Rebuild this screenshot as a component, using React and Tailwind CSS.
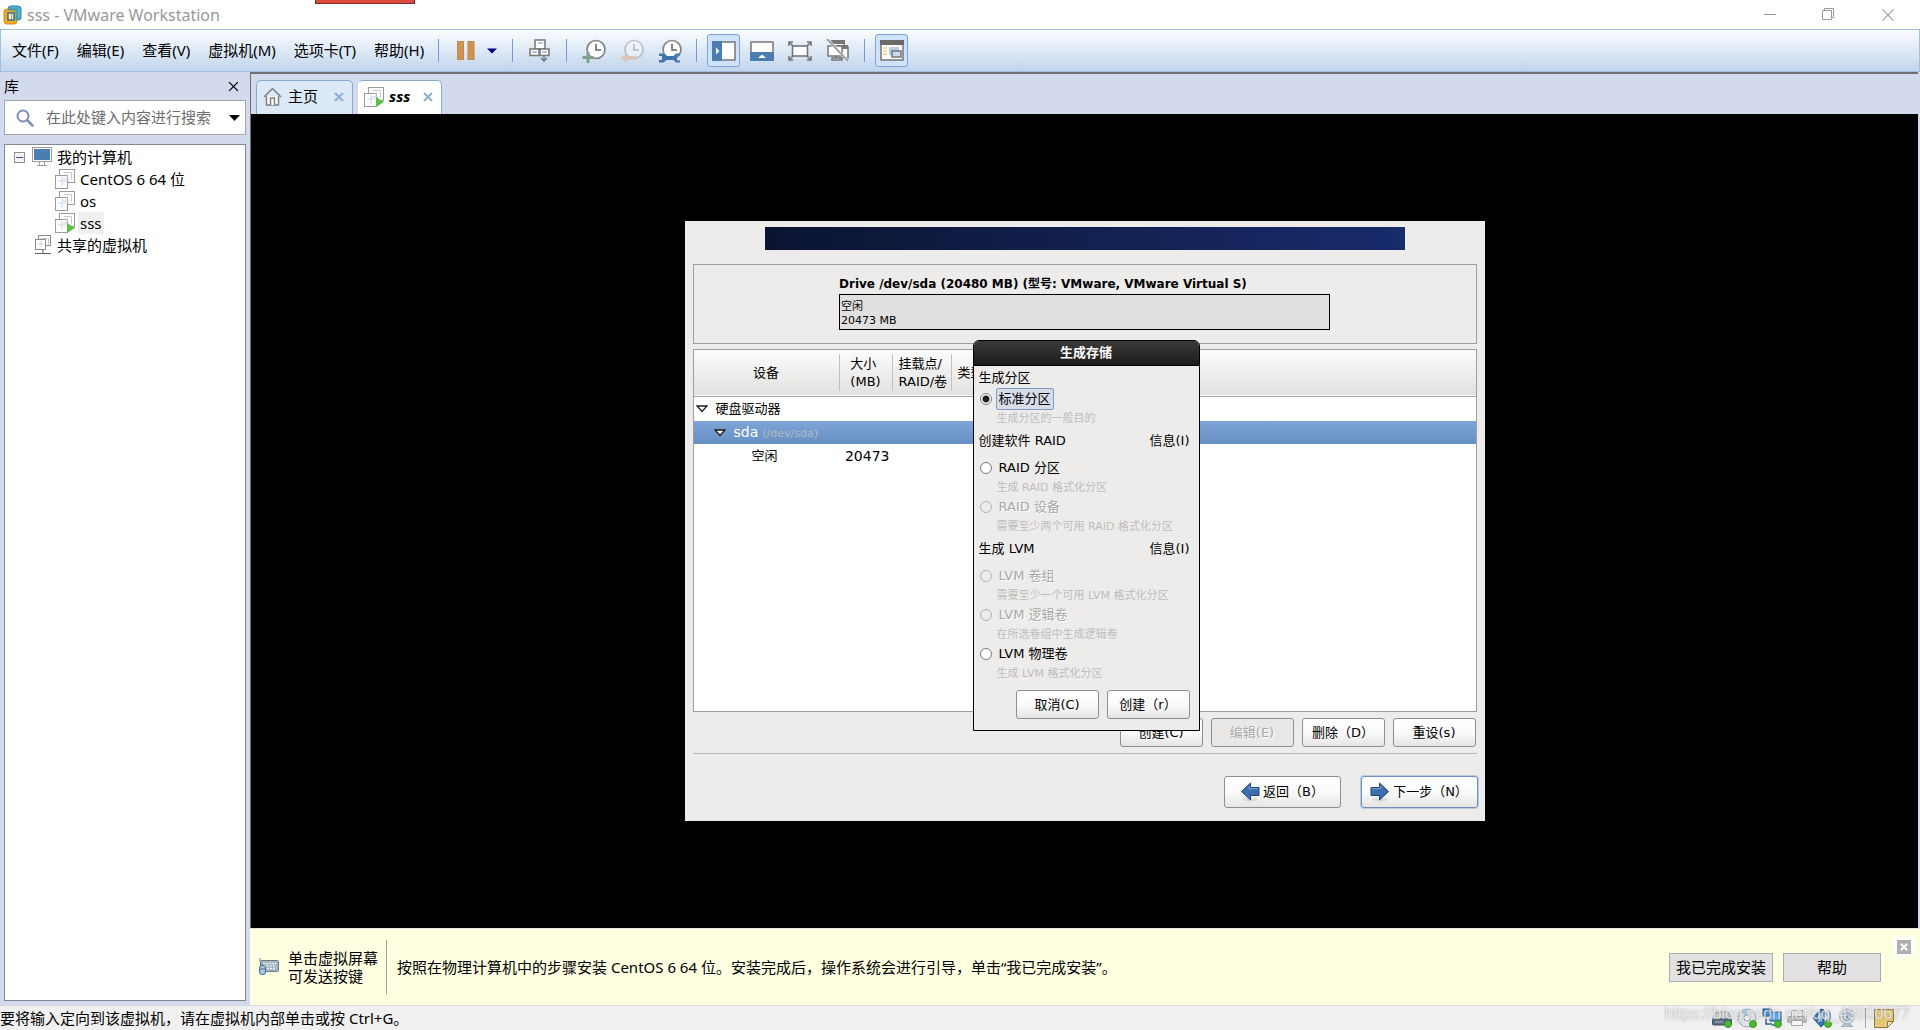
import { useState } from 'react';

const winFont = "font-['Noto_Sans','Noto_Sans_CJK_SC',sans-serif]";
const guestFont = "font-['DejaVu_Sans','Noto_Sans_CJK_SC',sans-serif]";

const menus = ['文件(F)', '编辑(E)', '查看(V)', '虚拟机(M)', '选项卡(T)', '帮助(H)'];

/* ---------- Icons ---------- */

function LogoIcon() {
  return (
    <svg width="19" height="20" viewBox="0 0 19 20" fill="none">
      <rect x="5" y="1" width="13" height="14" rx="3" fill="#4fb3cf" stroke="#2b7f9c" />
      <rect x="1" y="4" width="13" height="15" rx="3" fill="#f6a821" stroke="#d08a1c" />
      <path d="M5 4.500h8.500v11" stroke="#3a9cbc" strokeWidth="2" />
      <rect x="5" y="8" width="6" height="7" fill="#fff" stroke="#2d6f94" strokeWidth="1.500" />
      <path d="M8.500 9v5" stroke="#e89a1c" strokeWidth="1.500" />
    </svg>
  );
}

function PauseIcon() {
  return (
    <svg width="18" height="19" viewBox="0 0 18 19">
      <rect x="0.5" y="0.5" width="6" height="18" fill="#d3924a" stroke="#b98a5c" />
      <rect x="11" y="0.5" width="6" height="18" fill="#d3924a" stroke="#b98a5c" />
    </svg>
  );
}

function SendKeysIcon() {
  return (
    <svg width="21" height="23" viewBox="0 0 21 23" fill="#fff" stroke="#767676">
      <rect x="6" y="1" width="10" height="9" strokeWidth="1.5" />
      <rect x="1" y="10" width="9" height="6.5" strokeWidth="1.5" />
      <rect x="11" y="10" width="9" height="6.5" strokeWidth="1.5" />
      <path d="M9 4h5M3 13h5M13 13h5" stroke="#b5c8e2" strokeWidth="2" />
      <path d="M15 17v5M12 19l3 3 3-3" fill="none" strokeWidth="1.5" />
    </svg>
  );
}

function Clock({ children, faded }) {
  return (
    <svg width="24" height="24" viewBox="0 0 24 24" fill="none" opacity={faded ? 0.4 : 1}>
      <circle cx="14" cy="10.5" r="9" fill="#fcfcfc" stroke="#858585" strokeWidth="1.7" />
      <path d="M14 5v6h5" stroke="#666" strokeWidth="1.6" />
      {children}
    </svg>
  );
}

function TakeSnapshotIcon() {
  return (
    <Clock>
      <path d="M4.500 13h3v4h4v3h-4v4h-3v-4h-4v-3h4z" fill="#7fa08c" />
    </Clock>
  );
}

function RevertIcon() {
  return (
    <Clock faded>
      <path d="M0.500 19l6-5v3h10v4h-10v3z" fill="#e2a268" />
    </Clock>
  );
}

function ManageIcon() {
  return (
    <Clock>
      <path
        d="M1 14.500h4.500l3 2.500h7l2.500-2.500h4v2h-3v5h3v2h-4l-2.500-2.500h-7l-3 2.500H1v-2.500h3v-4H1z"
        fill="#3f74ad"
      />
    </Clock>
  );
}

function SidebarIcon() {
  return (
    <svg width="24" height="20" viewBox="0 0 24 20">
      <rect x="1" y="1" width="22" height="18" fill="#fff" stroke="#767676" strokeWidth="1.5" />
      <rect x="0" y="0" width="10" height="20" fill="#4a7db2" />
      <path d="M4 6.500l3.500 3.500L4 13.500z" fill="#fff" />
    </svg>
  );
}

function ThumbnailIcon() {
  return (
    <svg width="24" height="20" viewBox="0 0 24 20">
      <rect x="1" y="1" width="22" height="18" fill="#fff" stroke="#767676" strokeWidth="1.5" />
      <rect x="0" y="11" width="24" height="9" fill="#4a7db2" />
      <path d="M8 17l4-3.500 4 3.500z" fill="#fff" />
    </svg>
  );
}

function FullscreenIcon() {
  return (
    <svg width="24" height="20" viewBox="0 0 24 20" fill="none" stroke="#767676" strokeWidth="1.600">
      <rect x="4.500" y="5" width="15" height="10" fill="#fff" />
      <path d="M1 5V1h4M1 1l4 4M19 1h4v4M23 1l-4 4M1 15v4h4M1 19l4-4M19 19h4v-4M23 19l-4-4" />
    </svg>
  );
}

function UnityIcon() {
  return (
    <svg width="24" height="23" viewBox="0 0 24 23" fill="#fff" stroke="#767676" strokeWidth="1.500">
      <rect x="6" y="2" width="12" height="8" />
      <path d="M5 3h14" strokeWidth="4" />
      <rect x="10" y="8" width="12" height="11" />
      <path d="M10 8h12" strokeWidth="4" />
      <rect x="2" y="7" width="14" height="10" />
      <path d="M6 19h10v2H6z" />
      <path d="M1 0l21 22" stroke="#e6ecf4" strokeWidth="3" />
      <path d="M1 0l21 22" stroke="#8d8f98" />
    </svg>
  );
}

function ConsoleIcon() {
  return (
    <svg width="24" height="21" viewBox="0 0 24 21">
      <rect x="1" y="1" width="22" height="19" fill="#fff" stroke="#767676" strokeWidth="1.500" />
      <rect x="0" y="0" width="24" height="5" fill="#6a6a6a" />
      <path d="M3 8h4M3 11h4M3 14h4" stroke="#eab64f" />
      <rect x="9" y="7" width="10" height="8" fill="#b8cce4" />
      <rect x="12" y="11" width="9" height="6" fill="#cbdaf0" stroke="#767676" strokeWidth="1.500" />
    </svg>
  );
}

function VmIcon({ running }) {
  return (
    <svg width="20" height="20" viewBox="0 0 20 20" fill="#fff" stroke="#9a9a9a">
      <rect x="4.500" y="0.500" width="15" height="13" />
      <path d="M8.500 3.500h8v7" fill="none" stroke="#c9c9c9" />
      <rect x="0.500" y="6.500" width="12" height="13" />
      <path d="M3 12h8M7 8v9M8 10h6M12 5v6" fill="none" stroke="#c7d9ec" />
      {running && <path d="M12 10l8 5-8 5z" fill="#5bbf43" stroke="none" />}
    </svg>
  );
}

function SharedIcon() {
  return (
    <svg width="18" height="20" viewBox="0 0 18 20" fill="#fff" stroke="#8c8c8c">
      <rect x="4.500" y="0.500" width="12" height="10" />
      <path d="M6.500 3.500h8v6" fill="none" stroke="#c9c9c9" />
      <rect x="1.500" y="4.500" width="10" height="10" />
      <path d="M4 9h6M7 6v6" stroke="#c7d9ec" />
      <path d="M9 15v4M1 18.500h16" stroke="#5f5f5f" />
    </svg>
  );
}

function MonitorIcon() {
  return (
    <svg width="20" height="20" viewBox="0 0 20 20" fill="#fff" stroke="#9a9a9a">
      <rect x="0.500" y="0.500" width="19" height="14" />
      <rect x="2" y="2" width="16" height="11" fill="#4a7db2" stroke="none" />
      <path d="M7.500 15v3M12.500 15v3M5 18.500h10" />
    </svg>
  );
}

function HomeIcon() {
  return (
    <svg width="19" height="19" viewBox="0 0 19 19" fill="#fff" stroke="#808080" strokeWidth="1.500">
      <path d="M3.500 9v9h12V9" />
      <path d="M1 10L9.500 1.500 18 10" fill="none" />
      <path d="M7.500 18v-7h4v7" />
    </svg>
  );
}

function SearchIcon() {
  return (
    <svg width="18" height="18" viewBox="0 0 18 18" fill="none" stroke="#7b8fb8" strokeLinecap="round">
      <circle cx="7" cy="7" r="5.500" strokeWidth="2" />
      <path d="M11.500 11.500l5 5" strokeWidth="2.500" />
    </svg>
  );
}

function Cross({ size, color, width }) {
  return (
    <svg width={size} height={size} viewBox="0 0 10 10" fill="none" stroke={color} strokeWidth={width}>
      <path d="M1 1l8 8M9 1l-8 8" />
    </svg>
  );
}

function KeyboardIcon() {
  return (
    <svg width="20" height="18" viewBox="0 0 20 18">
      <rect x="1.500" y="2.500" width="18" height="11" rx="1" fill="#a9b7c3" stroke="#6c7b88" />
      <path d="M4 5.500h13M5 8h12M8 10.500h8" stroke="#f5f8fa" strokeDasharray="2 1" />
      <path d="M1 0v4l3 3" stroke="#6c8298" fill="none" />
      <rect x="0.500" y="7.500" width="6" height="9" rx="2.500" fill="#a9cbe6" stroke="#4d6d88" />
      <path d="M1 11h5" stroke="#4d6d88" />
    </svg>
  );
}

function Expander() {
  return (
    <svg width="12" height="8" viewBox="0 0 12 8" className="shrink-0">
      <path d="M1 1h10L6 6.500z" fill="#fff" stroke="#1b1b1b" strokeWidth="1.300" />
    </svg>
  );
}

function Arrow({ flip }) {
  return (
    <svg width="20" height="20" viewBox="0 0 20 20" className={flip ? '-scale-x-100' : ''}>
      <ellipse cx="10" cy="17.500" rx="8" ry="2" fill="#000" opacity="0.08" />
      <path d="M1 5.500h8.500V1l9 8.500-9 8.500v-4.500H1z" fill="#3d6fb0" stroke="#1f4478" />
      <path d="M2 6.700h8.700V4" stroke="#7fa5d4" fill="none" />
    </svg>
  );
}

function Connected() {
  return <circle cx="16" cy="16" r="3.500" fill="#4cb82f" stroke="#2f8a1c" strokeWidth="0.800" />;
}

function DiskIcon() {
  return (
    <svg width="20" height="20" viewBox="0 0 20 20">
      <path d="M4 4h12l3.500 7H0.500z" fill="#c9ced6" stroke="#8b93a0" />
      <rect x="0.500" y="11" width="19" height="6" rx="1" fill="#5f6d80" stroke="#47505e" />
      <path d="M3 14h8" stroke="#aeb8c6" />
      <Connected />
    </svg>
  );
}

function DiscIcon() {
  return (
    <svg width="20" height="20" viewBox="0 0 20 20">
      <circle cx="10" cy="10" r="9" fill="#dfe4ea" stroke="#9aa6b4" />
      <path d="M10 10L4 3.500A9 9 0 0 1 10 1z" fill="#a9c4de" />
      <circle cx="10" cy="10" r="3" fill="#f6f8fa" stroke="#8ea1b5" />
      <Connected />
    </svg>
  );
}

function NetworkIcon() {
  return (
    <svg width="20" height="20" viewBox="0 0 20 20">
      <rect x="1" y="1" width="8" height="7" fill="#3f8fd8" stroke="#20507f" />
      <rect x="8" y="4" width="11" height="9" fill="#57a9ee" stroke="#20507f" />
      <path d="M4 8v8h6M10 17h8" stroke="#2c5f93" strokeWidth="1.500" fill="none" />
      <Connected />
    </svg>
  );
}

function PrinterIcon() {
  return (
    <svg width="20" height="20" viewBox="0 0 20 20" stroke="#a9a9a9">
      <rect x="4.500" y="2.500" width="11" height="6" fill="#f2f2f2" />
      <rect x="0.500" y="8.500" width="19" height="6" rx="1" fill="#b9b9b9" />
      <rect x="4.500" y="12.500" width="11" height="5" fill="#f5f5f5" />
    </svg>
  );
}

function SoundIcon() {
  return (
    <svg width="20" height="20" viewBox="0 0 20 20">
      <path d="M1 10L9 1l3 1v14l-3 3z" fill="#3f78b3" stroke="#234f80" />
      <path d="M6 8l4-4v10z" fill="#b9d3ec" />
      <path d="M14 5a7 7 0 0 1 0 9M16 2a10 10 0 0 1 1 11" fill="none" stroke="#5f95c6" strokeWidth="1.500" />
      <Connected />
    </svg>
  );
}

function WebcamIcon() {
  return (
    <svg width="20" height="20" viewBox="0 0 20 20">
      <circle cx="10" cy="8.500" r="7.500" fill="#d3dae1" stroke="#9eabb8" />
      <circle cx="10" cy="8.500" r="4" fill="#b5cadb" stroke="#8fa5b8" />
      <circle cx="10" cy="8.500" r="1.500" fill="#728ba0" />
      <path d="M4 18.500c2-3 10-3 12 0z" fill="#c9d0d7" stroke="#9eabb8" />
    </svg>
  );
}

function NoteIcon() {
  return (
    <svg width="20" height="19" viewBox="0 0 20 19">
      <path d="M0.500 0.500h19v12l-6 6H0.500z" fill="#e6c877" stroke="#8a7747" />
      <path d="M13.500 18.500v-6h6z" fill="#f6e6b4" stroke="#8a7747" />
    </svg>
  );
}

/* ---------- Workstation chrome ---------- */

function ToolButton({ label, active, children }) {
  return (
    <button
      aria-label={label}
      className={`flex size-[33px] items-center justify-center rounded-[3px] border ${
        active ? 'border-[#7ba5d6] bg-[#cfe2fb]' : 'border-transparent'
      }`}
    >
      {children}
    </button>
  );
}

function Divider() {
  return <div className="mx-[10px] h-[23px] w-px bg-[#6f9bd0]" />;
}

function TitleBar() {
  return (
    <header className="relative flex h-[29px] items-center bg-white pl-[3px]">
      <LogoIcon />
      <h1 className="ml-[5px] text-base text-[#999]">sss - VMware Workstation</h1>
      <div className="absolute top-0 left-[315px] h-1 w-[100px] border border-t-0 border-[#7a2a22] bg-[#dc4b3e]" />
      <div className="ml-auto flex items-center gap-[46px] pr-[25px]">
        <button aria-label="最小化">
          <svg width="12" height="12" viewBox="0 0 12 12" stroke="#999">
            <path d="M0 5.500h12" />
          </svg>
        </button>
        <button aria-label="还原">
          <svg width="13" height="13" viewBox="0 0 13 13" fill="none" stroke="#999">
            <path d="M0.500 2.500h9v9h-9zM2.500 2V0.500h9v9H10" />
          </svg>
        </button>
        <button aria-label="关闭">
          <Cross size={14} color="#999" width={0.8} />
        </button>
      </div>
    </header>
  );
}

function MenuBar() {
  return (
    <div className="flex h-[43px] items-center border border-[#9fbfe0] bg-linear-to-b from-[#fbfdff] to-[#c1d5ec] pl-[11px]">
      <nav className="flex gap-[18px]">
        {menus.map((m) => (
          <button key={m} className="text-[15px] whitespace-nowrap">{m}</button>
        ))}
      </nav>
      <div className="ml-1 flex items-center">
        <Divider />
        <ToolButton label="挂起"><PauseIcon /></ToolButton>
        <button aria-label="电源选项" className="flex w-5 justify-center">
          <svg width="10" height="6" viewBox="0 0 10 6"><path d="M0 0.500h10L5 5.500z" fill="#00008b" /></svg>
        </button>
        <Divider />
        <ToolButton label="发送 Ctrl+Alt+Del"><SendKeysIcon /></ToolButton>
        <Divider />
        <div className="flex gap-[5px]">
          <ToolButton label="拍摄快照"><TakeSnapshotIcon /></ToolButton>
          <ToolButton label="恢复快照"><RevertIcon /></ToolButton>
          <ToolButton label="管理快照"><ManageIcon /></ToolButton>
        </div>
        <Divider />
        <div className="flex gap-[5px]">
          <ToolButton label="显示库" active><SidebarIcon /></ToolButton>
          <ToolButton label="缩略图栏"><ThumbnailIcon /></ToolButton>
          <ToolButton label="全屏"><FullscreenIcon /></ToolButton>
          <ToolButton label="Unity"><UnityIcon /></ToolButton>
        </div>
        <Divider />
        <ToolButton label="控制台视图" active><ConsoleIcon /></ToolButton>
      </div>
    </div>
  );
}

function Library() {
  return (
    <aside className="flex w-[250px] shrink-0 flex-col px-1 pb-1">
      <div className="flex h-7 items-center justify-between pr-[7px]">
        <h2 className="text-[15px]">库</h2>
        <button aria-label="关闭库"><Cross size={11} color="#000" width={1.2} /></button>
      </div>
      <div className="flex h-[35px] items-center border border-[#a5a5a5] bg-white pr-[5px] pl-[11px]">
        <SearchIcon />
        <input
          type="text"
          aria-label="搜索"
          placeholder="在此处键入内容进行搜索"
          className="ml-3 min-w-0 flex-1 text-[15px] outline-none placeholder:text-[#6d6d6d]"
        />
        <button aria-label="搜索选项">
          <svg width="11" height="6" viewBox="0 0 11 6"><path d="M0 0h11L5.500 6z" /></svg>
        </button>
      </div>
      <div className="mt-[9px] flex-1 border border-[#828790] bg-white pt-px text-[15px]">
        <ul>
          <li>
            <div className="flex h-[22px] items-center pl-[9px]">
              <button aria-label="折叠" className="mr-[7px] flex size-[11px] items-center justify-center border border-[#919191] bg-[#f4f4f4]">
                <span className="h-px w-[7px] bg-[#34529a]" />
              </button>
              <MonitorIcon />
              <span className="ml-[5px]">我的计算机</span>
            </div>
            <ul>
              <li className="flex h-[22px] items-center pl-[50px]"><VmIcon /><span className="ml-[5px]">CentOS 6 64 位</span></li>
              <li className="flex h-[22px] items-center pl-[50px]"><VmIcon /><span className="ml-[5px]">os</span></li>
              <li className="flex h-[22px] items-center pl-[50px]">
                <VmIcon running />
                <span className="ml-[3px] bg-[#f0f0f0] px-[2px] leading-[22px]">sss</span>
              </li>
            </ul>
          </li>
          <li className="flex h-[22px] items-center pl-[29px]"><SharedIcon /><span className="ml-[5px]">共享的虚拟机</span></li>
        </ul>
      </div>
    </aside>
  );
}

function Tabs() {
  return (
    <div className="flex h-[42px] items-end gap-[5px] border-t-2 border-[#707070] bg-[#d4daed] pl-[5px] text-[15px]">
      <div className="flex h-[34px] items-center rounded-t-[5px] border border-b-0 border-[#89abcd] bg-[#dbe8f6] pr-2 pb-[2px] pl-[6px]">
        <HomeIcon />
        <a href="#home" className="mr-4 ml-[6px]">主页</a>
        <button aria-label="关闭主页"><Cross size={10} color="#8db0d0" width={2} /></button>
      </div>
      <div className="flex h-[34px] items-center rounded-t-[5px] border border-b-0 border-l-white border-[#89abcd] bg-white pr-2 pb-[2px] pl-[5px]">
        <VmIcon running />
        <a href="#sss" className="mr-[13px] ml-[5px] font-bold italic">sss</a>
        <button aria-label="关闭 sss"><Cross size={10} color="#8db0d0" width={2} /></button>
      </div>
    </div>
  );
}

function InstallHint() {
  return (
    <div className="relative flex h-[77px] items-center border-t border-[#e3e3e3] bg-[#ffffe1] pr-[39px] pl-[9px] text-[15px]">
      <KeyboardIcon />
      <p className="ml-[9px] leading-[18px]">单击虚拟屏幕<br />可发送按键</p>
      <div className="mr-[10px] ml-2 h-[54px] w-px bg-[#a0a0a0]" />
      <p>按照在物理计算机中的步骤安装 CentOS 6 64 位。安装完成后，操作系统会进行引导，单击“我已完成安装”。</p>
      <div className="ml-auto flex gap-[10px]">
        <button className="h-[29px] w-[104px] border border-[#adadad] bg-[#e1e1e1]">我已完成安装</button>
        <button className="h-[29px] w-[98px] border border-[#adadad] bg-[#e1e1e1]">帮助</button>
      </div>
      <button aria-label="关闭提示" className="absolute top-[8px] right-[6px] border-[3px] border-white bg-[#b0b0b0] p-[3px]">
        <Cross size={8} color="#fff" width={2.5} />
      </button>
    </div>
  );
}

function StatusBar() {
  return (
    <footer className="relative flex h-[25px] items-center border-t border-[#d9d9d9] bg-[#f0f0f0] pr-[26px] text-[15px]">
      <p>要将输入定向到该虚拟机，请在虚拟机内部单击或按 Ctrl+G。</p>
      <div className="ml-auto flex items-center gap-[5px]">
        <DiskIcon />
        <DiscIcon />
        <NetworkIcon />
        <PrinterIcon />
        <SoundIcon />
        <WebcamIcon />
        <div className="mx-[3px] h-5 w-px bg-[#a5a5a5]" />
        <NoteIcon />
      </div>
      <p className="absolute right-[10px] bottom-[6px] font-['Liberation_Sans',sans-serif] text-base leading-5 text-white/70 [text-shadow:0_0_2px_#777a]">
        https://blog.csdn.net/qq_43900677
      </p>
    </footer>
  );
}

/* ---------- Guest installer ---------- */

function GtkButton({ children, disabled, wide, focus, onClick }) {
  return (
    <button
      disabled={disabled}
      onClick={onClick}
      className={`flex items-center justify-center gap-[3px] rounded-[3px] border whitespace-nowrap ${
        wide ? 'h-8 w-[117px]' : 'h-[29px] w-[83px]'
      } ${focus ? 'border-[#6c8fbd] ring-1 ring-[#b9cce4]' : 'border-[#928f8b]'} ${
        disabled
          ? 'bg-[#e9e8e7] text-[#a9a8a6] [text-shadow:1px_1px_0_#fff]'
          : 'bg-linear-to-b from-white via-[#fafafa] to-[#e6e5e4]'
      }`}
    >
      {children}
    </button>
  );
}

function Option({ id, label, hint, disabled, selected, onSelect }) {
  return (
    <div>
      <div className="flex h-[23px] items-center pl-px">
        <input
          type="radio"
          name="storage"
          id={id}
          disabled={disabled}
          checked={selected}
          onChange={() => onSelect(id)}
          className="size-3 appearance-none rounded-full border border-[#7d7b78] bg-white checked:bg-[radial-gradient(circle,#222_3px,#fff_4px)] disabled:border-[#b3b1ae] disabled:bg-[#edeceb]"
        />
        <label
          htmlFor={id}
          className={`ml-1 rounded-[2px] border px-[2px] leading-5 ${
            selected ? 'border-[#7f9cc6] bg-[#d6dde8]' : 'border-transparent'
          } ${disabled ? 'text-[#a9a8a6] [text-shadow:1px_1px_0_#fff]' : ''}`}
        >
          {label}
        </label>
      </div>
      <p className="h-4 pl-[18px] text-[11px] leading-[18px] whitespace-nowrap text-[#bebdbb]">{hint}</p>
    </div>
  );
}

function GroupTitle({ children }) {
  return (
    <div className="flex h-[30px] items-center justify-between pr-1">
      <h3>{children}</h3>
      <button>信息(I)</button>
    </div>
  );
}

function StorageDialog() {
  const [selected, setSelected] = useState('standard');
  const item = (id) => ({ id, selected: selected === id, onSelect: setSelected });

  return (
    <div role="dialog" aria-labelledby="dialog-title" className="absolute top-[119px] left-[288px] w-[227px] overflow-hidden rounded-t-[6px] border border-black bg-[#edeceb]">
      <h2 id="dialog-title" className="flex h-[25px] items-center justify-center border-b border-black bg-linear-to-b from-[#3a3a3a] to-[#1c1c1c] font-bold text-white">
        生成存储
      </h2>
      <div className="px-[5px] pt-[2px] pb-[11px]">
        <h3 className="leading-[19px]">生成分区</h3>
        <Option {...item('standard')} label="标准分区" hint="生成分区的一般目的" />
        <GroupTitle>创建软件 RAID</GroupTitle>
        <Option {...item('raid-part')} label="RAID 分区" hint="生成 RAID 格式化分区" />
        <Option {...item('raid-dev')} label="RAID 设备" hint="需要至少两个可用 RAID 格式化分区" disabled />
        <GroupTitle>生成 LVM</GroupTitle>
        <Option {...item('lvm-group')} label="LVM 卷组" hint="需要至少一个可用 LVM 格式化分区" disabled />
        <Option {...item('lvm-logical')} label="LVM 逻辑卷" hint="在所选卷组中生成逻辑卷" disabled />
        <Option {...item('lvm-physical')} label="LVM 物理卷" hint="生成 LVM 格式化分区" />
        <div className="mt-[9px] flex justify-end gap-2 pr-1">
          <GtkButton>取消(C)</GtkButton>
          <GtkButton>创建（r）</GtkButton>
        </div>
      </div>
    </div>
  );
}

function HeadCell({ children, center }) {
  return (
    <th className="p-0 font-normal">
      <div className={`flex h-[37px] items-center border-r border-[#c3c1be] leading-[18px] ${center ? 'justify-center' : 'pl-[6px]'}`}>
        {children}
      </div>
    </th>
  );
}

function DeviceTable() {
  return (
    <div className="mt-[5px] flex-1 border border-[#9f9d9a] bg-white">
      <table className="w-full table-fixed border-collapse text-left whitespace-nowrap">
        <colgroup>
          <col className="w-[146px]" />
          <col className="w-[53px]" />
          <col className="w-[59px]" />
          <col className="w-[60px]" />
          <col />
        </colgroup>
        <thead>
          <tr className="h-[46px] border-b border-[#a5a3a0] bg-linear-to-b from-[#fcfcfb] to-[#e2e1e0]">
            <HeadCell center>设备</HeadCell>
            <HeadCell center><span>大小<br />(MB)</span></HeadCell>
            <HeadCell><span>挂载点/<br />RAID/卷</span></HeadCell>
            <HeadCell>类型</HeadCell>
            <th className="p-0 font-normal" />
          </tr>
        </thead>
        <tbody>
          <tr className="h-[25px]">
            <td colSpan={5} className="p-0">
              <div className="flex items-center gap-2 pl-[2px]"><Expander />硬盘驱动器</div>
            </td>
          </tr>
          <tr className="h-[23px] bg-linear-to-b from-[#7ea5d8] to-[#668fc3] text-white">
            <td colSpan={5} className="p-0">
              <div className="flex items-baseline pl-5">
                <Expander />
                <span className="ml-2 text-sm">sda</span>
                <span className="ml-1 text-[11px] text-[#b4b8bf]">(/dev/sda)</span>
              </div>
            </td>
          </tr>
          <tr className="h-[23px]">
            <td className="p-0 pl-[58px]">空闲</td>
            <td className="p-0 pr-[3px] text-right text-sm">20473</td>
            <td colSpan={3} className="p-0" />
          </tr>
        </tbody>
      </table>
    </div>
  );
}

function Installer() {
  return (
    <div className={`relative flex min-h-[600px] w-[800px] flex-col bg-[#edeceb] px-2 pt-[6px] pb-[13px] text-[13px] ${guestFont}`}>
      <div className="mx-[72px] h-[23px] bg-linear-to-r from-[#0a1430] via-[#12204f] to-[#182b6b]" />
      <section className="mt-[14px] flex h-20 flex-col items-center border border-[#9f9d9a] pt-[9px]">
        <div className="w-[491px]">
          <h2 className="text-xs leading-5 font-bold whitespace-nowrap">Drive /dev/sda (20480 MB) (型号: VMware, VMware Virtual S)</h2>
          <div className="h-9 border border-black bg-[#e0e0e0] px-px pt-[5px] text-[11px] leading-[14px]">
            空闲<br />20473 MB
          </div>
        </div>
      </section>
      <DeviceTable />
      <div className="mt-[6px] flex justify-end gap-2 pr-px">
        <GtkButton>创建(C)</GtkButton>
        <GtkButton disabled>编辑(E)</GtkButton>
        <GtkButton>删除（D）</GtkButton>
        <GtkButton>重设(s)</GtkButton>
      </div>
      <hr className="mt-[6px] border-[#bdbbb8]" />
      <div className="mt-[22px] -mr-px flex justify-end gap-5">
        <GtkButton wide><Arrow flip /><span>返回（B）</span></GtkButton>
        <GtkButton wide focus><Arrow /><span>下一步（N）</span></GtkButton>
      </div>
      <StorageDialog />
    </div>
  );
}

export default function App() {
  return (
    <div className={`flex min-h-screen flex-col bg-[#d4daed] text-black ${winFont}`}>
      <TitleBar />
      <MenuBar />
      <div className="flex flex-1">
        <Library />
        <main className="flex min-w-0 flex-1 flex-col">
          <div className="mr-[2px] flex flex-1 flex-col border-l border-[#707070]">
            <Tabs />
            <div className="flex flex-1 items-center justify-center bg-black">
              <Installer />
            </div>
          </div>
          <InstallHint />
        </main>
      </div>
      <StatusBar />
    </div>
  );
}
